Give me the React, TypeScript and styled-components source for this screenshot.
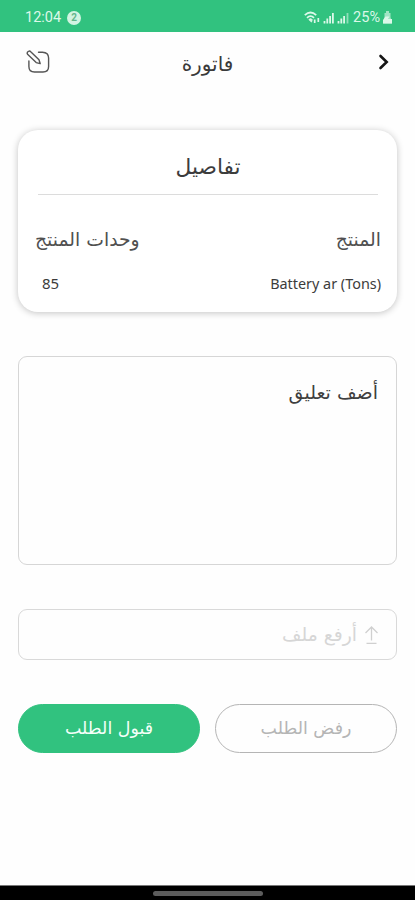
import React, { useState } from "react";
import styled, { createGlobalStyle } from "styled-components";

const GlobalStyle = createGlobalStyle`
    * {
        box-sizing: border-box;
    }
    body {
        margin: 0;
        background: #fefefe;
        font-family: 'DejaVu Sans', sans-serif;
    }
    button, textarea {
        font-family: inherit;
    }
`;

const Screen = styled.div`
    display: flex;
    flex-direction: column;
    width: 100%;
    height: 100vh;
    overflow: hidden;
    background: #fefefe;
`;

const StatusBar = styled.div`
    display: flex;
    align-items: center;
    justify-content: space-between;
    height: 32px;
    flex-shrink: 0;
    padding: 3px 23px 0 25px;
    background: #31c27f;
    color: #dcf8e9;
    font-family: Roboto, sans-serif;
    font-size: 14.5px;
    line-height: 17px;
`;

const StatusGroup = styled.div<{ $gap: number }>`
    display: flex;
    align-items: center;
    gap: ${props => props.$gap}px;
`;

const Notice = styled.span`
    display: flex;
    align-items: center;
    justify-content: center;
    width: 14px;
    height: 14px;
    border-radius: 50%;
    background: #d2f4e2;
    color: #63b78c;
    font-size: 10px;
    font-weight: 700;
`;

const Header = styled.header`
    display: grid;
    grid-template-columns: 26px 1fr 26px;
    align-items: center;
    height: 60px;
    flex-shrink: 0;
    padding: 0 18px 0 25px;
`;

const IconButton = styled.button`
    display: flex;
    align-items: center;
    justify-content: center;
    width: 26px;
    height: 26px;
    padding: 0;
    border: none;
    background: none;
    cursor: pointer;
`;

const Title = styled.h1`
    margin: 4px 7px 0 0;
    font-size: 20px;
    font-weight: 400;
    line-height: 26px;
    text-align: center;
    color: #3a3a3a;
`;

const Content = styled.main`
    display: flex;
    flex-direction: column;
    flex: 1;
    padding: 38px 18px 0;
`;

const Card = styled.section`
    height: 182px;
    padding: 0 16px 0 17px;
    border-radius: 20px;
    background: #ffffff;
    box-shadow: 0 1px 7px rgba(0, 0, 0, 0.24);
`;

const CardTitle = styled.h2`
    height: 65px;
    margin: 0 3px;
    padding-top: 23px;
    border-bottom: 1px solid #dcdcdc;
    font-size: 21.7px;
    font-weight: 400;
    line-height: 28px;
    text-align: center;
    color: #3c3c3c;
`;

const Row = styled.div<{ $top: number }>`
    display: flex;
    align-items: center;
    justify-content: space-between;
    height: 26px;
    margin-top: ${props => props.$top}px;
`;

const Label = styled.span`
    font-size: 18.8px;
    color: #505050;
`;

const Value = styled.span`
    font-family: 'Noto Sans', sans-serif;
    font-size: 14.4px;
    color: #3c3c3c;
`;

const Units = styled(Value)`
    margin-left: 7px;
    font-size: 15px;
`;

const Comment = styled.textarea`
    display: block;
    width: 100%;
    height: 209px;
    margin-top: 44px;
    padding: 22px 18px;
    border: 1.5px solid #d6d6d6;
    border-radius: 9px;
    outline: none;
    resize: none;
    background: transparent;
    font-size: 19px;
    line-height: 26px;
    color: #333333;
    &::placeholder {
        color: #3f3f3f;
        opacity: 1;
    }
`;

const Upload = styled.button`
    display: flex;
    align-items: center;
    gap: 7px;
    width: 100%;
    height: 51px;
    margin-top: 44px;
    padding: 0 17px;
    border: 1.5px solid #d9d9d9;
    border-radius: 9px;
    background: transparent;
    font-size: 18.8px;
    color: #d6d6d6;
    cursor: pointer;
`;

const Actions = styled.div`
    display: flex;
    gap: 15px;
    margin-top: 44px;
`;

const Action = styled.button<{ $primary?: boolean }>`
    flex: 1;
    height: 49px;
    padding: 0 0 2px;
    border: 1.5px solid ${props => (props.$primary ? "#31c27f" : "#b5b5b5")};
    border-radius: 25px;
    background: ${props => (props.$primary ? "#31c27f" : "transparent")};
    font-size: 17.4px;
    color: ${props => (props.$primary ? "#f4fff9" : "#b5b5b5")};
    cursor: pointer;
`;

const NavBar = styled.div`
    display: flex;
    justify-content: center;
    height: 15px;
    flex-shrink: 0;
    padding-top: 5px;
    border-top: 1px solid #777777;
    background: #000000;
`;

const NavHandle = styled.span`
    width: 110px;
    height: 5px;
    border-radius: 3px;
    background: #5c5c5c;
`;

const SignalIcons = () => (
    <svg width="46" height="14" viewBox="0 0 46 14" fill="none" stroke="#dcf8e9">
        <path d="M.8 4.2Q6.5 -1.2 12.2 4.2M3 6.8Q6.5 3.4 10 6.8" strokeWidth="1.8" />
        <path d="M4.8 8.5Q6.5 7 8.2 8.5L7.5 11Z" fill="#dcf8e9" strokeWidth="1" />
        <path d="M10.7 12V8.5M14.3 7V11" strokeWidth="1.7" />
        <path d="M20.5 12.5V10M23.3 12.5V7.5M26.1 12.5V5M28.9 12.5V2" strokeWidth="1.8" />
        <path d="M34.5 12.5V10M37.3 12.5V7.5M40.1 12.5V5" strokeWidth="1.8" />
        <path d="M43.5 12.5V2" strokeWidth="1.8" opacity=".55" />
    </svg>
);

const BatteryIcon = () => (
    <svg width="9" height="13" viewBox="0 0 9 13" fill="#dcf8e9">
        <path d="M3 0H6V2H7.5V6L9 12.5H0L1.5 6V2H3Z" opacity=".65" />
        <path d="M2.5 5.5H6.5L4.8 8H9V12.5H0V9Z" />
    </svg>
);

const EditIcon = () => (
    <svg width="26" height="26" viewBox="0 0 26 26" fill="none" stroke="#555555" strokeWidth="1.4" strokeLinejoin="round" strokeLinecap="round">
        <path d="M13.5 3.2H17.5Q23.6 3.4 23.6 9V17.5Q23.6 23 18 23H9.5Q3.9 23 3.9 17.5V12" />
        <path d="M2.3 3.5Q4 .9 6 3L14 10.8L15.2 14.7L11.2 13.6L2.8 5.6Q1.8 4.5 2.3 3.5Z" />
    </svg>
);

const ChevronIcon = () => (
    <svg width="12" height="18" viewBox="0 0 12 18" fill="none" stroke="#151515" strokeWidth="2.6" strokeLinecap="round">
        <path d="M2.5 3L8.7 9L2.5 15" />
    </svg>
);

const UploadIcon = () => (
    <svg width="15" height="20" viewBox="0 0 15 20" fill="none" stroke="#d0d0d0" strokeWidth="1.3">
        <path d="M7.5 15.5V2M1.5 8L7.5 2L13.5 8M2.5 18.3H12.5" />
    </svg>
);

const App = () => {
    const [comment, setComment] = useState("");

    const handleComment = (event: React.ChangeEvent<HTMLTextAreaElement>) => {
        setComment(event.target.value);
    };

    return (
        <>
            <GlobalStyle />
            <Screen>
                <StatusBar>
                    <StatusGroup $gap={6}>
                        <span>12:04</span>
                        <Notice>2</Notice>
                    </StatusGroup>
                    <StatusGroup $gap={3}>
                        <SignalIcons />
                        <span>25%</span>
                        <BatteryIcon />
                    </StatusGroup>
                </StatusBar>
                <Header>
                    <IconButton>
                        <EditIcon />
                    </IconButton>
                    <Title dir="rtl">فاتورة</Title>
                    <IconButton>
                        <ChevronIcon />
                    </IconButton>
                </Header>
                <Content dir="rtl">
                    <Card>
                        <CardTitle>تفاصيل</CardTitle>
                        <Row $top={31}>
                            <Label>المنتج</Label>
                            <Label>وحدات المنتج</Label>
                        </Row>
                        <Row $top={18}>
                            <Value dir="ltr">Battery ar (Tons)</Value>
                            <Units>85</Units>
                        </Row>
                    </Card>
                    <Comment placeholder="أضف تعليق" value={comment} onChange={handleComment} />
                    <Upload>
                        <UploadIcon />
                        <span>أرفع ملف</span>
                    </Upload>
                    <Actions>
                        <Action>رفض الطلب</Action>
                        <Action $primary>قبول الطلب</Action>
                    </Actions>
                </Content>
                <NavBar>
                    <NavHandle />
                </NavBar>
            </Screen>
        </>
    );
};

export default App;
